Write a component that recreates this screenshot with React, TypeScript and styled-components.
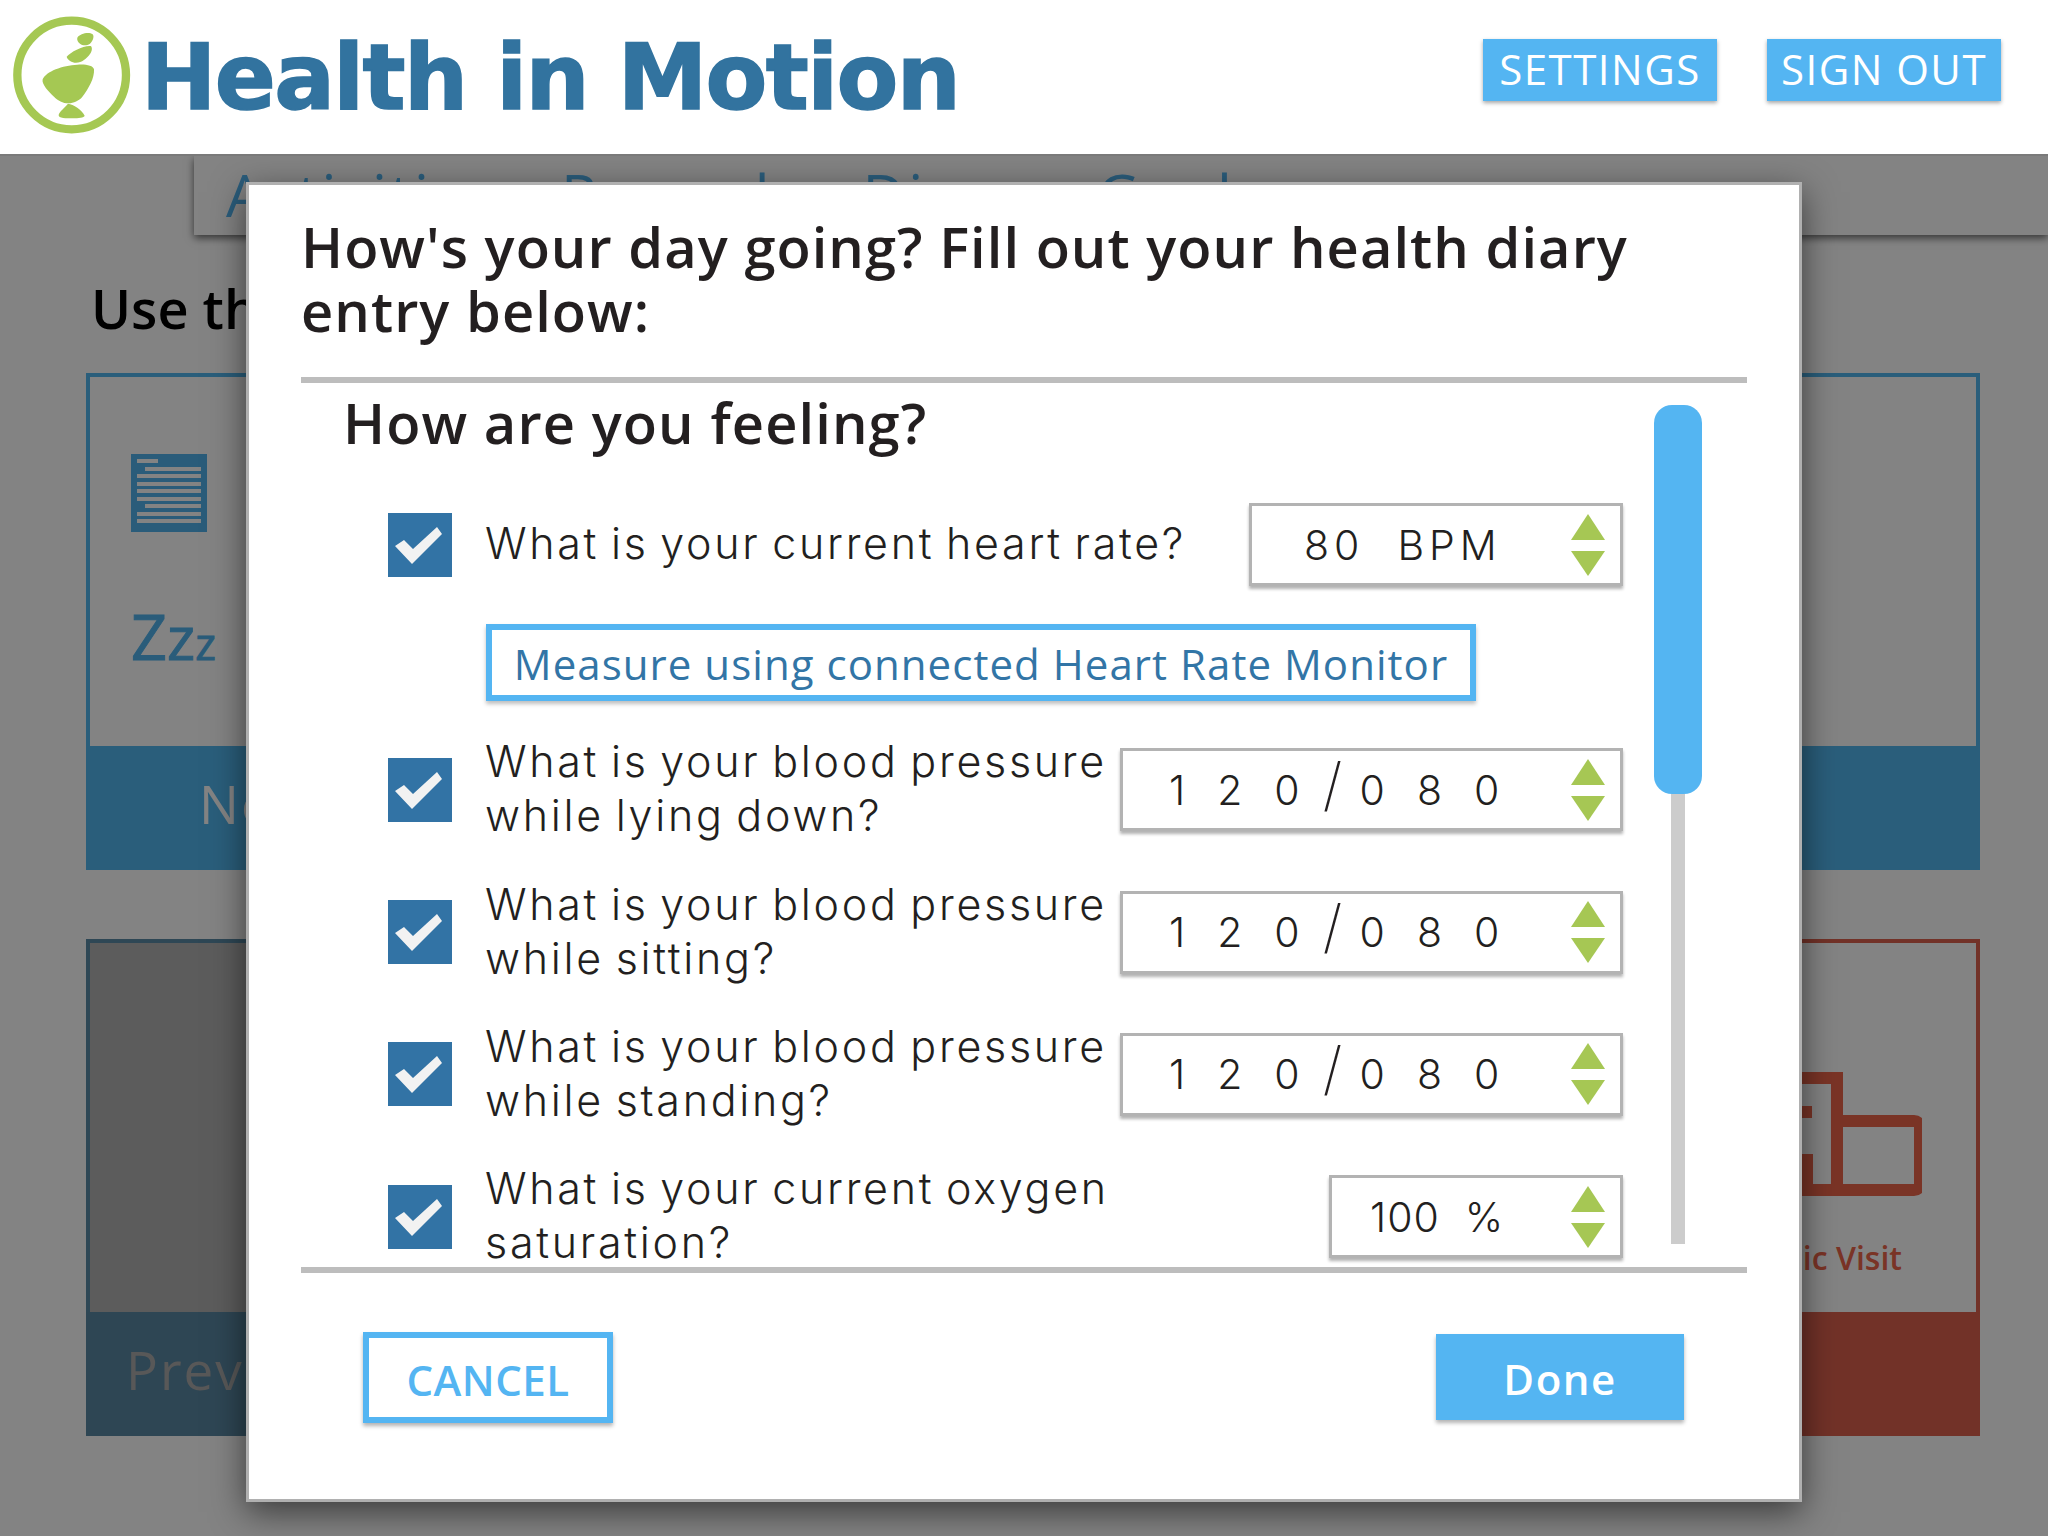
import styled, { createGlobalStyle } from 'styled-components';

const GlobalStyle = createGlobalStyle`
  html, body {
    margin: 0;
    padding: 0;
    background: #fff;
  }
  body {
    font-family: 'Open Sans', 'Liberation Sans', sans-serif;
  }
  * {
    box-sizing: border-box;
  }
`;

const Logo = () => (
  <svg width="160" height="150" viewBox="0 0 480 450">
    <circle cx="215" cy="225" r="163" fill="none" stroke="#a5c853" strokeWidth="25" />
    <g fill="#a5c853">
      <path d="M232 113c8-12 34-18 46-10 6 6 0 22-8 28-10 6-22 6-30 0-6-4-10-12-8-18z" />
      <path d="M200 170c12-14 50-34 72-32 6 4 4 16-2 24-10 14-24 26-42 26-12 0-26-8-28-18z" />
      <path d="M128 238c10-24 60-42 104-44 24-2 48 2 50 14 2 26-16 58-36 84-8 10-26 18-40 18-18 0-32-8-44-20-16-14-38-38-34-52z" />
      <path d="M176 345c2-10 18-22 28-34 16 2 42 18 50 36-2 6-18 8-36 8-18 0-44 0-42-10z" />
    </g>
  </svg>
);

const DocIcon = () => (
  <svg width="76" height="78" viewBox="0 0 76 78">
    <rect width="76" height="78" fill="#52b4ee" />
    <g fill="#fff">
      <rect x="6" y="5" width="21" height="4" />
      <rect x="14" y="13" width="56" height="4" />
      <rect x="6" y="20" width="64" height="4" />
      <rect x="6" y="28" width="64" height="4" />
      <rect x="6" y="35" width="64" height="4" />
      <rect x="6" y="43" width="64" height="4" />
      <rect x="14" y="50" width="56" height="4" />
      <rect x="6" y="58" width="64" height="4" />
      <rect x="6" y="65" width="64" height="4" />
    </g>
  </svg>
);

const ClinicIcon = () => (
  <svg width="240" height="124" viewBox="0 0 240 124">
    <g fill="none" stroke="#ed654a" strokeWidth="12">
      <path d="M6 118V6h149v112z" />
      <path d="M155 49h77a6 6 0 0 1 6 6v57a6 6 0 0 1-6 6H155" />
      <path d="M92 16v48M68 40h62" />
      <path d="M90 88h35v30" />
    </g>
  </svg>
);

const CheckMark = () => (
  <svg width="64" height="64" viewBox="0 0 64 64">
    <polygon points="49,14 54,21 24,51 7,33 16,27 25,36" fill="#f2f2f2" />
  </svg>
);

type Measure = {
  label: string[];
  value: string;
  inputWidth: number;
  inset: number;
  tracking: number;
};

const bloodPressure = (position: string): Measure => ({
  label: ['What is your blood pressure', `while ${position}?`],
  value: '120/080',
  inputWidth: 503,
  inset: 46,
  tracking: 32,
});

const pressureRows: Measure[] = [
  bloodPressure('lying down'),
  bloodPressure('sitting'),
  bloodPressure('standing'),
  {
    label: ['What is your current oxygen', 'saturation?'],
    value: '100  %',
    inputWidth: 294,
    inset: 38,
    tracking: 1,
  },
];

const Row = ({ label, value, inputWidth, inset, tracking }: Measure) => {
  const [first, second] = value.split('/');
  return (
    <StyledRow>
      <StyledCheckbox>
        <CheckMark />
      </StyledCheckbox>
      <StyledLabel>
        {label.map((line) => (
          <div key={line}>{line}</div>
        ))}
      </StyledLabel>
      <StyledInput $width={inputWidth} $inset={inset}>
        <StyledValue $tracking={tracking}>
          {first}
          {second && <StyledSlash>/</StyledSlash>}
          {second}
        </StyledValue>
        <StyledSpinner>
          <StyledArrowUp />
          <StyledArrowDown />
        </StyledSpinner>
      </StyledInput>
    </StyledRow>
  );
};

const App = () => (
  <StyledPage>
    <GlobalStyle />
    <StyledHeader>
      <StyledBrand>
        <StyledLogo>
          <Logo />
        </StyledLogo>
        <StyledBrandName>Health in Motion</StyledBrandName>
      </StyledBrand>
      <StyledHeaderActions>
        <StyledHeaderButton>SETTINGS</StyledHeaderButton>
        <StyledHeaderButton>SIGN OUT</StyledHeaderButton>
      </StyledHeaderActions>
    </StyledHeader>

    <StyledContent>
      <StyledTabs>
        <StyledTab $gap={0}>Activities</StyledTab>
        <StyledTab $gap={62}>Record</StyledTab>
        <StyledTab $gap={90}>Diary</StyledTab>
        <StyledTab $gap={75}>Goals</StyledTab>
      </StyledTabs>
      <StyledIntro>Use the buttons below</StyledIntro>
      <StyledCards>
        <StyledCard $wide>
          <StyledCardBody>
            <DocIcon />
            <StyledSleep>
              Z<StyledSleepMid>z</StyledSleepMid>
              <StyledSleepSmall>z</StyledSleepSmall>
            </StyledSleep>
          </StyledCardBody>
          <StyledCardBand>
            <StyledBandLabel>Notes</StyledBandLabel>
          </StyledCardBand>
        </StyledCard>
        <StyledCard $tone="muted">
          <StyledCardBody />
          <StyledCardBand>
            <StyledBandLabel $tone="muted">Previous</StyledBandLabel>
          </StyledCardBand>
        </StyledCard>
        <StyledCard $tone="alert">
          <StyledClinicBody>
            <ClinicIcon />
            <StyledClinicLabel>Clinic Visit</StyledClinicLabel>
          </StyledClinicBody>
          <StyledCardBand />
        </StyledCard>
      </StyledCards>

      <StyledOverlay>
        <StyledModal>
          <StyledModalTitle>
            How's your day going? Fill out your health diary
            <br />
            entry below:
          </StyledModalTitle>
          <StyledScrollArea>
            <StyledList>
              <StyledSectionTitle>How are you feeling?</StyledSectionTitle>
              <Row
                label={['What is your current heart rate?']}
                value="80  BPM"
                inputWidth={374}
                inset={52}
                tracking={5}
              />
              <StyledMonitorButton>
                Measure using connected Heart Rate Monitor
              </StyledMonitorButton>
              {pressureRows.map((row) => (
                <Row key={row.label.join()} {...row} />
              ))}
            </StyledList>
            <StyledScrollbar>
              <StyledScrollThumb />
              <StyledScrollRail />
            </StyledScrollbar>
          </StyledScrollArea>
          <StyledModalFooter>
            <StyledCancelButton>CANCEL</StyledCancelButton>
            <StyledDoneButton>Done</StyledDoneButton>
          </StyledModalFooter>
        </StyledModal>
      </StyledOverlay>
    </StyledContent>
  </StyledPage>
);

const StyledPage = styled.div`
  width: 2048px;
  height: 1536px;
  overflow: hidden;
  display: flex;
  flex-direction: column;
`;

const StyledHeader = styled.header`
  position: relative;
  z-index: 3;
  flex: none;
  height: 156px;
  padding: 0 47px 0 0;
  display: flex;
  align-items: flex-start;
  justify-content: space-between;
  background-color: #fff;
  border-bottom: 2px solid #7a7a7a;
`;

const StyledBrand = styled.div`
  display: flex;
  align-items: flex-start;
`;

const StyledLogo = styled.div`
  width: 141px;
  height: 150px;
  overflow: hidden;
`;

const StyledBrandName = styled.div`
  margin-top: 23px;
  font-family: 'DejaVu Sans', 'Liberation Sans', sans-serif;
  font-size: 90px;
  line-height: 110px;
  font-weight: 700;
  letter-spacing: -1.6px;
  -webkit-text-stroke: 1.5px #32739f;
  color: #32739f;
  white-space: nowrap;
`;

const StyledHeaderActions = styled.div`
  display: flex;
  gap: 50px;
  margin-top: 39px;
`;

const StyledHeaderButton = styled.div`
  width: 234px;
  height: 62px;
  padding-bottom: 3px;
  display: flex;
  align-items: center;
  justify-content: center;
  background-color: #54b5f2;
  color: #fff;
  font-size: 42px;
  letter-spacing: 1.5px;
  box-shadow: 0 2px 4px rgba(0, 0, 0, 0.35);
`;

const StyledContent = styled.main`
  position: relative;
  flex: 1;
  padding-left: 86px;
  padding-right: 68px;
`;

const StyledTabs = styled.nav`
  height: 79px;
  margin-left: 108px;
  margin-right: -68px;
  padding: 2px 0 0 32px;
  display: flex;
  align-items: flex-start;
  background-color: #fff;
  box-shadow: 0 3px 8px rgba(0, 0, 0, 0.6);
`;

const StyledTab = styled.div<{ $gap: number }>`
  margin-left: ${(p) => p.$gap}px;
  font-size: 59px;
  line-height: 72px;
  letter-spacing: 3px;
  color: #54b5f2;
`;

const StyledIntro = styled.div`
  margin: 42px 0 0 5px;
  font-size: 54px;
  line-height: 62px;
  font-weight: 600;
  color: #000;
`;

const StyledCards = styled.div`
  margin-top: 34px;
  display: grid;
  grid-template-columns: 1fr 1fr;
  grid-auto-rows: 497px;
  gap: 69px 40px;
`;

const cardTone = {
  base: { line: '#52b7f0', band: '#52b7f0', fill: '#fff' },
  muted: { line: '#5a8aa6', band: '#5a88a3', fill: '#b3b3b3' },
  alert: { line: '#de614e', band: '#de614e', fill: '#fff' },
};

type Tone = keyof typeof cardTone;

const StyledCard = styled.section<{ $wide?: boolean; $tone?: Tone }>`
  grid-column: ${(p) => (p.$wide ? '1 / -1' : 'auto')};
  display: flex;
  flex-direction: column;
  border: 4px solid ${(p) => cardTone[p.$tone ?? 'base'].line};
  border-bottom: 0;
  background-color: ${(p) => cardTone[p.$tone ?? 'base'].fill};
  --band: ${(p) => cardTone[p.$tone ?? 'base'].band};
`;

const StyledCardBody = styled.div`
  flex: 1;
  padding: 77px 0 0 41px;
`;

const StyledCardBand = styled.div`
  flex: none;
  height: 124px;
  margin: 0 -4px;
  padding: 0 0 10px 40px;
  display: flex;
  align-items: center;
  background-color: var(--band);
`;

const StyledBandLabel = styled.div<{ $tone?: Tone }>`
  padding-left: ${(p) => (p.$tone === 'muted' ? 0 : 73)}px;
  font-size: 53px;
  letter-spacing: 2px;
  color: ${(p) => (p.$tone === 'muted' ? '#ababab' : '#fff')};
`;

const StyledSleep = styled.div`
  margin-top: 56px;
  display: flex;
  align-items: baseline;
  font-size: 63px;
  line-height: 86px;
  color: #52b4ee;
  -webkit-text-stroke: 1px #52b4ee;
`;

const StyledSleepMid = styled.span`
  font-size: 60px;
`;

const StyledSleepSmall = styled.span`
  font-size: 44px;
`;

const StyledClinicBody = styled.div`
  flex: 1;
  padding: 129px 54px 0 0;
  display: flex;
  flex-direction: column;
  align-items: flex-end;
`;

const StyledClinicLabel = styled.div`
  margin-top: 40px;
  margin-right: 20px;
  font-size: 32px;
  line-height: 44px;
  font-weight: 600;
  color: #ed654a;
`;

const StyledOverlay = styled.div`
  position: absolute;
  inset: 0;
  z-index: 2;
  padding-top: 26px;
  display: flex;
  justify-content: center;
  align-items: flex-start;
  background-color: rgba(0, 0, 0, 0.486);
`;

const StyledModal = styled.div`
  width: 1556px;
  height: 1320px;
  padding: 0 52px;
  display: flex;
  flex-direction: column;
  background-color: #fff;
  border: 3px solid #b0b0b0;
  box-shadow: 0 10px 32px rgba(0, 0, 0, 0.55);
`;

const StyledModalTitle = styled.h1`
  flex: none;
  height: 198px;
  margin: 0;
  padding-top: 29px;
  border-bottom: 6px solid #bdbdbd;
  font-size: 56px;
  line-height: 64px;
  font-weight: 600;
  letter-spacing: 1.05px;
  color: #231f20;
`;

const StyledScrollArea = styled.div`
  flex: none;
  height: 884px;
  display: flex;
  overflow: hidden;
`;

const StyledList = styled.div`
  flex: none;
  width: 1322px;
`;

const StyledSectionTitle = styled.h2`
  margin: 0 0 49px 42px;
  padding-top: 7px;
  font-size: 56px;
  line-height: 64px;
  font-weight: 600;
  letter-spacing: 1.1px;
  color: #231f20;
`;

const StyledRow = styled.div`
  height: 83px;
  margin-bottom: 59.33px;
  padding-left: 87px;
  display: flex;
  align-items: center;
`;

const StyledCheckbox = styled.div`
  flex: none;
  width: 64px;
  height: 64px;
  background-color: #3273a5;
`;

const StyledLabel = styled.div`
  flex: 1;
  margin: 0 0 3px 33px;
  font-family: 'Inter', 'Liberation Sans', sans-serif;
  font-size: 43px;
  line-height: 54px;
  font-weight: 300;
  letter-spacing: 2.7px;
  word-spacing: -3px;
  color: #231f20;
  white-space: nowrap;
`;

const StyledInput = styled.div<{ $width: number; $inset: number }>`
  flex: none;
  width: ${(p) => p.$width}px;
  height: 83px;
  padding: 0 15px 0 ${(p) => p.$inset}px;
  display: flex;
  align-items: center;
  justify-content: space-between;
  background-color: #fff;
  border: 3px solid #b3b3b3;
  box-shadow: 0 3px 3px rgba(0, 0, 0, 0.3);
`;

const StyledValue = styled.div<{ $tracking: number }>`
  font-family: 'Inter', 'Liberation Sans', sans-serif;
  font-size: 41px;
  font-weight: 300;
  letter-spacing: ${(p) => p.$tracking}px;
  white-space: pre;
  color: #231f20;
`;

const StyledSlash = styled.span`
  margin-left: -9px;
  font-size: 58px;
  line-height: 0;
  font-weight: 200;
  letter-spacing: 17.5px;
`;

const StyledSpinner = styled.div`
  flex: none;
  display: flex;
  flex-direction: column;
  gap: 11px;
`;

const StyledArrowUp = styled.div`
  width: 0;
  height: 0;
  border-left: 17.5px solid transparent;
  border-right: 17.5px solid transparent;
  border-bottom: 26px solid #a6c754;
`;

const StyledArrowDown = styled.div`
  width: 0;
  height: 0;
  border-left: 17.5px solid transparent;
  border-right: 17.5px solid transparent;
  border-top: 25px solid #a6c754;
`;

const StyledMonitorButton = styled.div`
  width: 990px;
  height: 77px;
  margin: -21px 0 47px 185px;
  padding-top: 2px;
  display: flex;
  align-items: center;
  justify-content: center;
  border: 6px solid #54b5f2;
  box-shadow: 0 3px 4px rgba(0, 0, 0, 0.25);
  font-size: 42px;
  letter-spacing: 1.05px;
  color: #3275a6;
  white-space: nowrap;
`;

const StyledScrollbar = styled.div`
  flex: none;
  width: 48px;
  height: 861px;
  margin: 22px 0 0 31px;
  display: flex;
  flex-direction: column;
  align-items: center;
`;

const StyledScrollThumb = styled.div`
  flex: none;
  width: 48px;
  height: 389px;
  border-radius: 18px;
  background-color: #54b5f2;
`;

const StyledScrollRail = styled.div`
  flex: none;
  width: 14px;
  height: 450px;
  background-color: #ccc;
`;

const StyledModalFooter = styled.div`
  flex: none;
  height: 232px;
  padding: 0 63px 0 62px;
  border-top: 6px solid #bdbdbd;
  display: flex;
  align-items: flex-start;
  justify-content: space-between;
`;

const StyledCancelButton = styled.div`
  width: 250px;
  height: 91px;
  margin-top: 59px;
  padding-top: 3px;
  display: flex;
  align-items: center;
  justify-content: center;
  border: 6px solid #54b5f2;
  box-shadow: 0 3px 4px rgba(0, 0, 0, 0.3);
  font-size: 42px;
  font-weight: 600;
  letter-spacing: 0.5px;
  color: #54b5f2;
`;

const StyledDoneButton = styled.div`
  width: 248px;
  height: 86px;
  margin-top: 61px;
  padding-top: 2px;
  display: flex;
  align-items: center;
  justify-content: center;
  background-color: #54b5f2;
  box-shadow: 0 3px 4px rgba(0, 0, 0, 0.3);
  font-size: 42px;
  font-weight: 600;
  letter-spacing: 1.5px;
  color: #fff;
`;

export default App;
